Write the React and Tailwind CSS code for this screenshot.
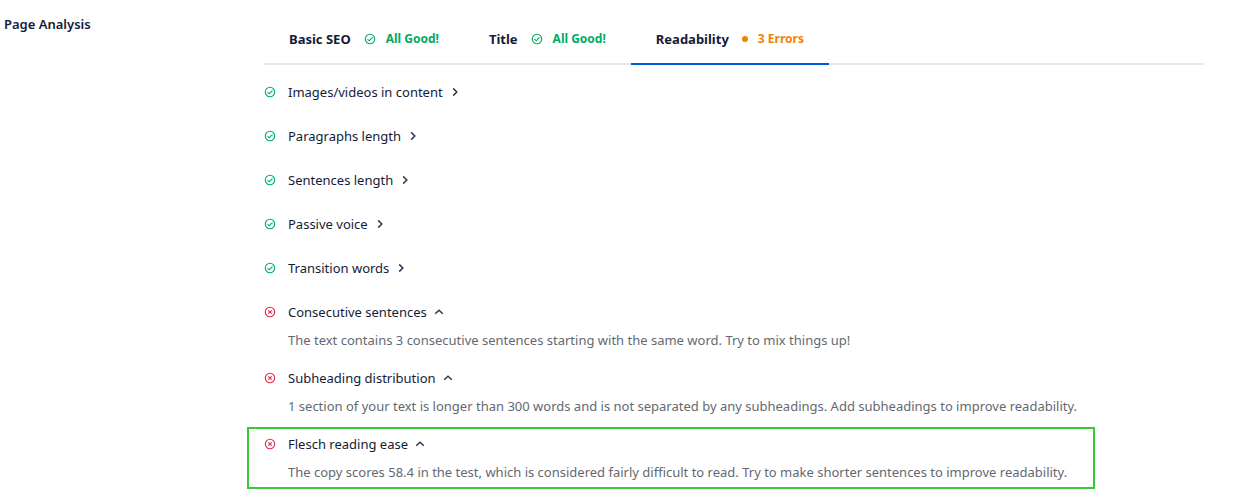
import { useState } from "react";
import clsx from "clsx";

const tabs = [
  { name: "Basic SEO", status: "All Good!", errors: 0 },
  { name: "Title", status: "All Good!", errors: 0 },
  { name: "Readability", status: "3 Errors", errors: 3 },
];

const checks = [
  { title: "Images/videos in content", passed: true },
  { title: "Paragraphs length", passed: true },
  { title: "Sentences length", passed: true },
  { title: "Passive voice", passed: true },
  { title: "Transition words", passed: true },
  {
    title: "Consecutive sentences",
    passed: false,
    text: "The text contains 3 consecutive sentences starting with the same word. Try to mix things up!",
  },
  {
    title: "Subheading distribution",
    passed: false,
    text: "1 section of your text is longer than 300 words and is not separated by any subheadings. Add subheadings to improve readability.",
  },
  {
    title: "Flesch reading ease",
    passed: false,
    highlighted: true,
    text: "The copy scores 58.4 in the test, which is considered fairly difficult to read. Try to make shorter sentences to improve readability.",
  },
];

function CircleCheck({ className }) {
  return (
    <svg viewBox="0 0 12 12" className={clsx("size-3 shrink-0 text-[#00aa63]", className)} fill="none" stroke="currentColor" aria-hidden="true">
      <circle cx="6" cy="6" r="4.7" strokeWidth="1.1" />
      <path d="M3.5 6.2l1.7 1.6 3.4-3.5" strokeWidth="1.1" />
    </svg>
  );
}

function CircleClose() {
  return (
    <svg viewBox="0 0 12 12" className="size-3 shrink-0 text-[#df2a4a]" fill="none" stroke="currentColor" aria-hidden="true">
      <circle cx="6" cy="6" r="4.7" strokeWidth="1.1" />
      <path d="M4.3 4.3l3.4 3.4M7.7 4.3L4.3 7.7" strokeWidth="1.1" />
    </svg>
  );
}

function Caret({ open }) {
  return (
    <svg viewBox="0 0 10 10" className="size-[10px] shrink-0" fill="none" stroke="#2f3453" strokeWidth="1.5" aria-hidden="true">
      <path d={open ? "M1.2 6.8L5 3.2l3.8 3.6" : "M3.2 1.4L6.8 5 3.2 8.6"} />
    </svg>
  );
}

function Tab({ tab, active, onClick }) {
  return (
    <button
      type="button"
      role="tab"
      aria-selected={active}
      onClick={onClick}
      className={clsx(
        "-mb-0.5 flex cursor-pointer items-center border-b-2 px-[25px] pt-[15px] pb-[14px]",
        active ? "border-[#005ae0]" : "border-transparent"
      )}
    >
      <span className="text-[13px] leading-5 font-bold">{tab.name}</span>
      {tab.errors > 0 ? (
        <span className="ml-[13px] size-1.5 rounded-full bg-[#f18200]" />
      ) : (
        <CircleCheck className="ml-[13px]" />
      )}
      <span
        className={clsx(
          "ml-[10px] text-xs leading-5 font-bold",
          tab.errors > 0 ? "text-[#f18200]" : "text-[#00aa63]"
        )}
      >
        {tab.status}
      </span>
    </button>
  );
}

function Check({ check }) {
  const [open, setOpen] = useState(!check.passed);

  return (
    <li
      className={clsx(
        check.highlighted && "-mt-[7px] -ml-[17px] w-fit border-2 border-[#33cc33] py-[5px] pr-[26px] pl-[15px]",
        !check.highlighted && (open ? "mb-[18px]" : "mb-6")
      )}
    >
      <button
        type="button"
        aria-expanded={open}
        onClick={() => setOpen(!open)}
        className="flex cursor-pointer items-center text-[13px] leading-5"
      >
        {check.passed ? <CircleCheck /> : <CircleClose />}
        <span className="mr-[7px] ml-3">{check.title}</span>
        <Caret open={open} />
      </button>
      {open && check.text && (
        <p className="mt-2 ml-6 text-[13px] leading-5 text-[#646970]">{check.text}</p>
      )}
    </li>
  );
}

function App() {
  const [activeTab, setActiveTab] = useState("Readability");

  return (
    <div className="flex bg-white pt-[14px] pr-[29px] pl-1 font-['Noto_Sans',sans-serif] text-[#141b38]">
      <h2 className="w-[260px] shrink-0 text-[13px] leading-5 font-semibold">Page Analysis</h2>
      <div className="min-w-0 flex-1">
        <div role="tablist" className="flex border-b-2 border-[#e8e8eb]">
          {tabs.map((tab) => (
            <Tab
              key={tab.name}
              tab={tab}
              active={tab.name === activeTab}
              onClick={() => setActiveTab(tab.name)}
            />
          ))}
        </div>
        <ul className="mt-[17px]">
          {checks.map((check) => (
            <Check key={check.title} check={check} />
          ))}
        </ul>
      </div>
    </div>
  );
}

export default App;
